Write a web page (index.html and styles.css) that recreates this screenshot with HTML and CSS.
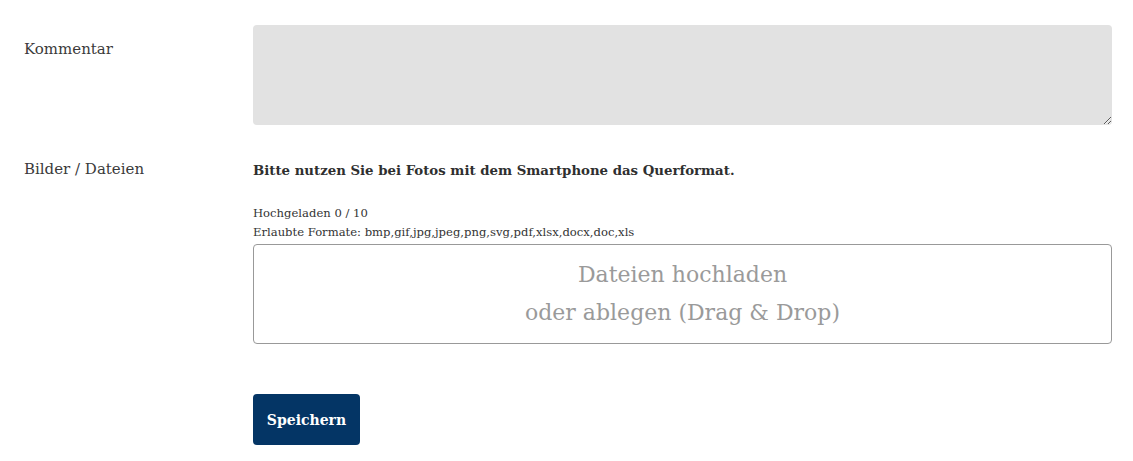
FILE: index.html
```html
<!DOCTYPE html>
<html lang="de">
<head>
    <meta charset="UTF-8">
    <meta name="viewport" content="width=device-width, initial-scale=1.0">
    <title>Meldung</title>
    <link rel="stylesheet" href="styles.css">
</head>
<body>
    <form class="form">
        <div class="row row-comment">
            <label class="label" for="comment">Kommentar</label>
            <div class="field">
                <textarea id="comment" class="textarea"></textarea>
            </div>
        </div>
        <div class="row row-files">
            <div class="label">Bilder / Dateien</div>
            <div class="field">
                <p class="hint">Bitte nutzen Sie bei Fotos mit dem Smartphone das Querformat.</p>
                <div class="meta">
                    <div>Hochgeladen 0 / 10</div>
                    <div>Erlaubte Formate: bmp,gif,jpg,jpeg,png,svg,pdf,xlsx,docx,doc,xls</div>
                </div>
                <div class="dropzone">
                    <span>Dateien hochladen</span>
                    <span>oder ablegen (Drag &amp; Drop)</span>
                </div>
            </div>
        </div>
        <div class="row row-submit">
            <div class="label"></div>
            <div class="field">
                <button type="submit" class="btn">Speichern</button>
            </div>
        </div>
    </form>
</body>
</html>
```

FILE: styles.css
```css
body {
    margin: 0;
    font-family: "DejaVu Serif", "Liberation Serif", serif;
    color: #333;
    background: #fff;
}
.form {
    padding: 25px 21px 0 24px;
}
.row {
    display: grid;
    grid-template-columns: 229px 1fr;
}
.label {
    font-size: 15px;
    color: #3a3a3a;
}
.row-comment .label {
    padding-top: 15px;
}
.textarea {
    display: block;
    width: 100%;
    height: 100px;
    box-sizing: border-box;
    background: #e2e2e2;
    border: none;
    border-radius: 4px;
    resize: vertical;
}
.row-files {
    margin-top: 35px;
}
.hint {
    margin: 0;
    padding-top: 3px;
    font-size: 13.3px;
    font-weight: bold;
    color: #2f2f2f;
}
.meta {
    margin-top: 26px;
    font-size: 11.6px;
    line-height: 19px;
    color: #333;
}
.dropzone {
    margin-top: 2px;
    height: 100px;
    box-sizing: border-box;
    border: 1px solid #999;
    border-radius: 4px;
    display: flex;
    flex-direction: column;
    align-items: center;
    justify-content: center;
    font-size: 22px;
    line-height: 38px;
    color: #9a9a9a;
    padding-bottom: 1px;
}
.row-submit {
    margin-top: 50px;
}
.btn {
    width: 107px;
    height: 51px;
    background: #043565;
    color: #fff;
    border: none;
    border-radius: 4px;
    font-family: inherit;
    font-size: 14px;
    font-weight: bold;
    cursor: pointer;
}
```
